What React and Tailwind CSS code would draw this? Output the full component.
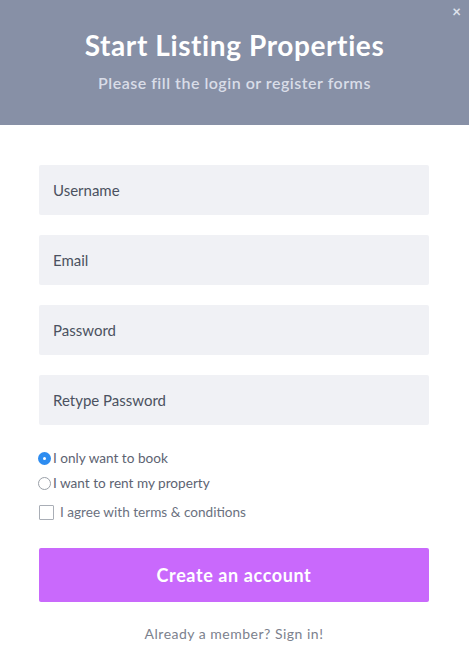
import React from 'react'

const FIELDS = ['Username', 'Email', 'Password', 'Retype Password']

export default function App() {
  return (
    <div className="w-[469px] h-[645px] bg-white font-['Lato','Open_Sans',sans-serif] relative overflow-hidden">
      {/* Header */}
      <div className="h-[125px] bg-[#8790a6] flex flex-col items-center pt-[27px]">
        <h1 className="text-white text-[28px] font-bold leading-[36px] tracking-[0.6px]">Start Listing Properties</h1>
        <p className="text-[#d9dde8] text-[16px] font-semibold mt-[10px] leading-[20px] tracking-[0.5px]">Please fill the login or register forms</p>
      </div>
      <button className="absolute right-[8px] top-[4px] text-[#dfe3ec] text-[15px] font-bold leading-none">×</button>

      {/* Form */}
      <div className="pl-[39px] pt-[40px] flex flex-col w-[429px]">
        <div className="flex flex-col gap-[20px]">
          {FIELDS.map((f) => (
            <input
              key={f}
              placeholder={f}
              className="h-[50px] w-[390px] bg-[#f0f1f5] rounded-[2px] px-[14px] text-[15px] text-[#4b5160] placeholder:text-[#4b5160] outline-none"
            />
          ))}
        </div>

        <div className="mt-[25px] flex flex-col gap-[9px] text-[13.6px] text-[#5d6372]">
          <label className="flex items-center gap-[2px] leading-[16px]">
            <span className="w-[13px] h-[13px] rounded-full bg-[#2d8cf0] flex items-center justify-center -ml-[1px]">
              <span className="w-[3px] h-[3px] rounded-full bg-white" />
            </span>
            I only want to book
          </label>
          <label className="flex items-center gap-[2px] leading-[16px]">
            <span className="w-[13px] h-[13px] rounded-full border border-[#9aa0a8] bg-white -ml-[1px]" />
            I want to rent my property
          </label>
          <label className="flex items-center gap-[6px] leading-[16px] mt-[4px] text-[#6b7180]">
            <span className="w-[15px] h-[15px] border border-[#a9aeb6] rounded-[1px] bg-white" />
            I agree with terms &amp; conditions
          </label>
        </div>

        <button className="mt-[28px] h-[54px] w-[390px] rounded-[2px] bg-[#c969fc] text-white text-[18px] font-bold tracking-[0.6px]">
          Create an account
        </button>

        <p className="mt-[21px] w-[390px] text-center text-[14px] text-[#7c818d] tracking-[0.5px]">Already a member? Sign in!</p>
      </div>
    </div>
  )
}
